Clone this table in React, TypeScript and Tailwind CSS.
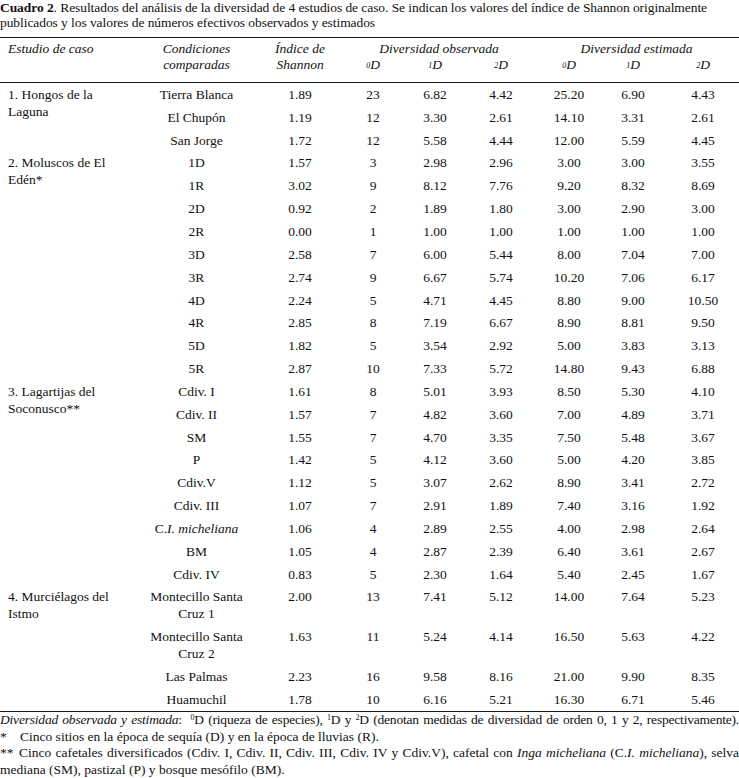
import React from 'react';

/**
 * Cuadro 2 - tabla de diversidad de 4 estudios de caso
 */

type Row = {
  cond: React.ReactNode;
  h: string;
  obs: [string, string, string];
  est: [string, string, string];
};

type Group = {
  label: string;
  rows: Row[];
};

const CI = (
  <>
    C.<i>I. micheliana</i>
  </>
);

const groups: Group[] = [
  {
    label: '1. Hongos de la Laguna',
    rows: [
      { cond: 'Tierra Blanca', h: '1.89', obs: ['23', '6.82', '4.42'], est: ['25.20', '6.90', '4.43'] },
      { cond: 'El Chupón', h: '1.19', obs: ['12', '3.30', '2.61'], est: ['14.10', '3.31', '2.61'] },
      { cond: 'San Jorge', h: '1.72', obs: ['12', '5.58', '4.44'], est: ['12.00', '5.59', '4.45'] },
    ],
  },
  {
    label: '2. Moluscos de El Edén*',
    rows: [
      { cond: '1D', h: '1.57', obs: ['3', '2.98', '2.96'], est: ['3.00', '3.00', '3.55'] },
      { cond: '1R', h: '3.02', obs: ['9', '8.12', '7.76'], est: ['9.20', '8.32', '8.69'] },
      { cond: '2D', h: '0.92', obs: ['2', '1.89', '1.80'], est: ['3.00', '2.90', '3.00'] },
      { cond: '2R', h: '0.00', obs: ['1', '1.00', '1.00'], est: ['1.00', '1.00', '1.00'] },
      { cond: '3D', h: '2.58', obs: ['7', '6.00', '5.44'], est: ['8.00', '7.04', '7.00'] },
      { cond: '3R', h: '2.74', obs: ['9', '6.67', '5.74'], est: ['10.20', '7.06', '6.17'] },
      { cond: '4D', h: '2.24', obs: ['5', '4.71', '4.45'], est: ['8.80', '9.00', '10.50'] },
      { cond: '4R', h: '2.85', obs: ['8', '7.19', '6.67'], est: ['8.90', '8.81', '9.50'] },
      { cond: '5D', h: '1.82', obs: ['5', '3.54', '2.92'], est: ['5.00', '3.83', '3.13'] },
      { cond: '5R', h: '2.87', obs: ['10', '7.33', '5.72'], est: ['14.80', '9.43', '6.88'] },
    ],
  },
  {
    label: '3. Lagartijas del Soconusco**',
    rows: [
      { cond: 'Cdiv. I', h: '1.61', obs: ['8', '5.01', '3.93'], est: ['8.50', '5.30', '4.10'] },
      { cond: 'Cdiv. II', h: '1.57', obs: ['7', '4.82', '3.60'], est: ['7.00', '4.89', '3.71'] },
      { cond: 'SM', h: '1.55', obs: ['7', '4.70', '3.35'], est: ['7.50', '5.48', '3.67'] },
      { cond: 'P', h: '1.42', obs: ['5', '4.12', '3.60'], est: ['5.00', '4.20', '3.85'] },
      { cond: 'Cdiv.V', h: '1.12', obs: ['5', '3.07', '2.62'], est: ['8.90', '3.41', '2.72'] },
      { cond: 'Cdiv. III', h: '1.07', obs: ['7', '2.91', '1.89'], est: ['7.40', '3.16', '1.92'] },
      { cond: CI, h: '1.06', obs: ['4', '2.89', '2.55'], est: ['4.00', '2.98', '2.64'] },
      { cond: 'BM', h: '1.05', obs: ['4', '2.87', '2.39'], est: ['6.40', '3.61', '2.67'] },
      { cond: 'Cdiv. IV', h: '0.83', obs: ['5', '2.30', '1.64'], est: ['5.40', '2.45', '1.67'] },
    ],
  },
  {
    label: '4. Murciélagos del Istmo',
    rows: [
      { cond: 'Montecillo Santa Cruz 1', h: '2.00', obs: ['13', '7.41', '5.12'], est: ['14.00', '7.64', '5.23'] },
      { cond: 'Montecillo Santa Cruz 2', h: '1.63', obs: ['11', '5.24', '4.14'], est: ['16.50', '5.63', '4.22'] },
      { cond: 'Las Palmas', h: '2.23', obs: ['16', '9.58', '8.16'], est: ['21.00', '9.90', '8.35'] },
      { cond: 'Huamuchil', h: '1.78', obs: ['10', '6.16', '5.21'], est: ['16.30', '6.71', '5.46'] },
    ],
  },
];

// Italic D with a small superscript order
function OrderD({ n }: { n: number }) {
  return (
    <span className="italic">
      <sup className="text-[8px] relative -top-[1px]">{n}</sup>D
    </span>
  );
}

const td = 'px-0 py-[2.93px] align-top text-center font-normal';

export default function App() {
  return (
    <div className="w-[739px] bg-white text-[#111] font-['Liberation_Serif','Times_New_Roman',serif] text-[13.5px]">
      {/* Caption */}
      <p className="text-[13.5px] leading-[15px] whitespace-nowrap tracking-[-0.07px]">
        <b>Cuadro 2</b>. Resultados del análisis de la diversidad de 4 estudios de caso. Se indican los valores del índice de Shannon originalmente
        <br />
        publicados y los valores de números efectivos observados y estimados
      </p>

      <table className="mt-[7px] w-[739px] table-fixed border-collapse">
        <colgroup>
          <col className="w-[137px]" />
          <col className="w-[119px]" />
          <col className="w-[88px]" />
          <col className="w-[58px]" />
          <col className="w-[66px]" />
          <col className="w-[66px]" />
          <col className="w-[70px]" />
          <col className="w-[58px]" />
          <col className="w-[77px]" />
        </colgroup>
        <thead className="border-y border-[#1a1a1a] italic leading-[16px]">
          <tr>
            <th rowSpan={2} className="pl-[8px] pt-[3px] align-top text-left font-normal">
              Estudio de caso
            </th>
            <th rowSpan={2} className="pt-[3px] align-top text-center font-normal">
              Condiciones comparadas
            </th>
            <th rowSpan={2} className="pt-[3px] align-top text-center font-normal">
              Índice de Shannon
            </th>
            <th colSpan={3} className="pt-[3px] align-top text-center font-normal">
              Diversidad observada
            </th>
            <th colSpan={3} className="pt-[3px] align-top text-center font-normal">
              Diversidad estimada
            </th>
          </tr>
          <tr>
            <th className="pb-[9px] text-center font-normal"><OrderD n={0} /></th>
            <th className="pb-[9px] text-center font-normal"><OrderD n={1} /></th>
            <th className="pb-[9px] text-center font-normal"><OrderD n={2} /></th>
            <th className="pb-[9px] text-center font-normal"><OrderD n={0} /></th>
            <th className="pb-[9px] text-center font-normal"><OrderD n={1} /></th>
            <th className="pb-[9px] pl-[5px] text-center font-normal"><OrderD n={2} /></th>
          </tr>
        </thead>
        <tbody className="border-b border-[#1a1a1a] leading-[17px]">
          {groups.map((g) =>
            g.rows.map((r, i) => (
              <tr key={g.label + i}>
                {i === 0 && (
                  <td rowSpan={g.rows.length} className="pl-[8px] pr-[16px] py-[2.93px] align-top text-left">
                    {g.label}
                  </td>
                )}
                <td className={td}>{r.cond}</td>
                <td className={td}>{r.h}</td>
                <td className={td}>{r.obs[0]}</td>
                <td className={td}>{r.obs[1]}</td>
                <td className={td}>{r.obs[2]}</td>
                <td className={td}>{r.est[0]}</td>
                <td className={td}>{r.est[1]}</td>
                <td className={td + ' pl-[5px]'}>{r.est[2]}</td>
              </tr>
            ))
          )}
        </tbody>
      </table>

      {/* Footnotes */}
      <div className="leading-[16.7px] pb-[2px]">
        <p className="text-justify [text-align-last:justify] tracking-[-0.2px]">
          <i>Diversidad observada y estimada</i>:&nbsp;&nbsp;<sup className="text-[8px]">0</sup>D (riqueza de especies),{' '}
          <sup className="text-[8px]">1</sup>D y <sup className="text-[8px]">2</sup>D (denotan medidas de diversidad de orden 0, 1 y 2, respectivamente).
        </p>
        <p className="whitespace-nowrap">
          <span className="inline-block w-[20px]">*</span>Cinco sitios en la época de sequía (D) y en la época de lluvias (R).
        </p>
        <p className="text-justify">
          <span className="inline-block w-[19px]">**</span>Cinco cafetales diversificados (Cdiv. I, Cdiv. II, Cdiv. III, Cdiv. IV y Cdiv.V), cafetal con <i>Inga micheliana</i> (C.<i>I. micheliana</i>), selva mediana (SM), pastizal (P) y bosque mesófilo (BM).
        </p>
      </div>
    </div>
  );
}
